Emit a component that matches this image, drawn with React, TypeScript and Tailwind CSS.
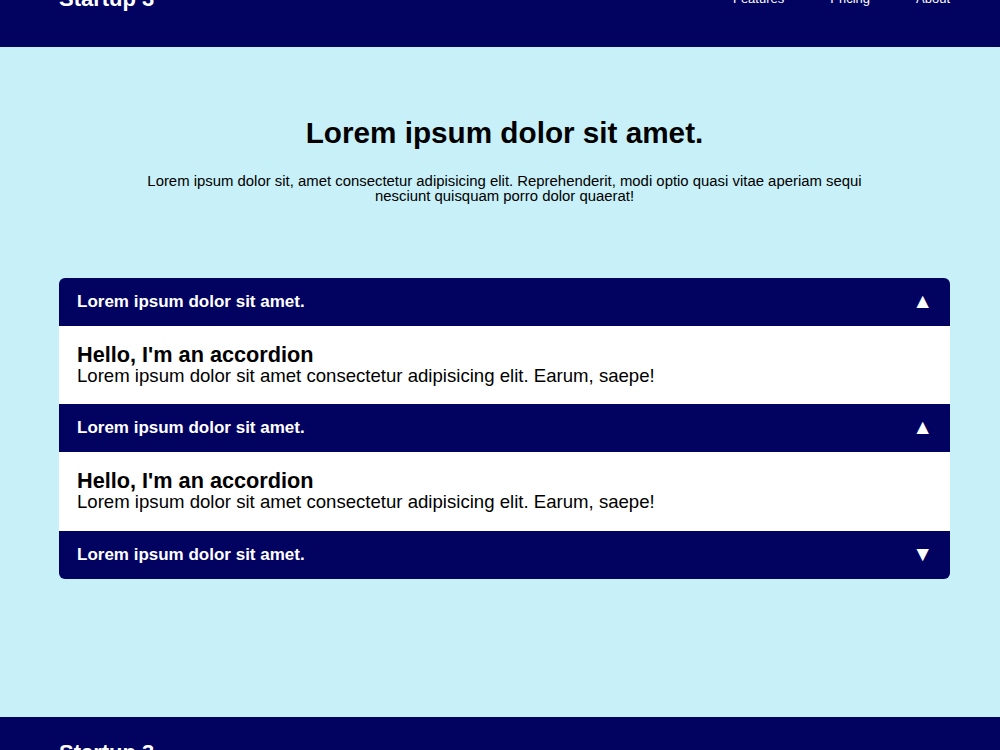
const NAVY = "bg-[#020260]";

type Section = {
  title: string;
  open: boolean;
  bodyHeight?: string;
};

const sections: Section[] = [
  { title: "Lorem ipsum dolor sit amet.", open: true, bodyHeight: "h-[78px]" },
  { title: "Lorem ipsum dolor sit amet.", open: true, bodyHeight: "h-[79px]" },
  { title: "Lorem ipsum dolor sit amet.", open: false },
];

function AccordionItem({ title, open, bodyHeight }: Section) {
  return (
    <div>
      <div className={`flex h-12 items-center justify-between pl-[18px] pr-[17px] text-white ${NAVY}`}>
        <span className="text-[17px] font-bold">{title}</span>
        <span className="mb-[3px] text-[21px] leading-none">{open ? "▲" : "▼"}</span>
      </div>
      {open && (
        <div className={`${bodyHeight} bg-white px-[18px] pt-[18px] text-black`}>
          <h3 className="text-[21.7px] font-bold leading-[22px]">Hello, I'm an accordion</h3>
          <p className="text-[18.6px] leading-[20px]">
            Lorem ipsum dolor sit amet consectetur adipisicing elit. Earum, saepe!
          </p>
        </div>
      )}
    </div>
  );
}

export default function App() {
  return (
    <div className="min-h-[750px] bg-[#c8f0f8] font-['Liberation_Sans',Arial,sans-serif]">
      <header className={`h-[47px] overflow-hidden ${NAVY} text-white`}>
        <div className="ml-[59px] mr-[50px] flex items-start justify-between">
          <span className="-mt-[13px] text-[22px] font-bold leading-6">Startup 3</span>
          <nav className="-mt-[9px] flex gap-[46px] text-[13px] leading-4">
            <span>Features</span>
            <span>Pricing</span>
            <span>About</span>
          </nav>
        </div>
      </header>

      <main className="ml-[59px] mr-[50px] pt-[68px] pb-[138px]">
        <h1 className="text-center text-[29.7px] font-bold leading-[36px] text-black">
          Lorem ipsum dolor sit amet.
        </h1>
        <p className="mx-auto mt-[23px] max-w-[730px] text-center text-[14.9px] leading-[15px] text-black">
          Lorem ipsum dolor sit, amet consectetur adipisicing elit. Reprehenderit, modi optio quasi vitae
          aperiam sequi nesciunt quisquam porro dolor quaerat!
        </p>

        <div className="mt-[74px] overflow-hidden rounded-md">
          {sections.map((s, i) => (
            <AccordionItem key={i} {...s} />
          ))}
        </div>
      </main>

      <footer className={`${NAVY} px-[59px] pt-[24px] pb-10 text-white`}>
        <span className="text-[22px] font-bold leading-6">Startup 3</span>
      </footer>
    </div>
  );
}
